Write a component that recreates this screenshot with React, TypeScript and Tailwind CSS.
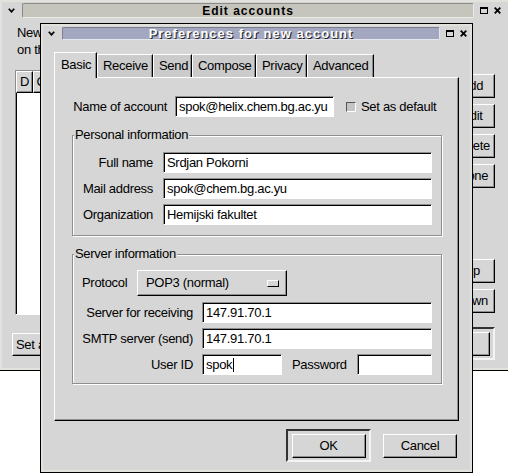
import React from 'react';

const raised =
  'border border-t-white border-l-white border-r-black border-b-black shadow-[inset_-1px_-1px_0_#8e8e8e]';
const sunken =
  'border border-t-[#8e8e8e] border-l-[#8e8e8e] border-r-white border-b-white shadow-[inset_1px_1px_0_#000]';
const etched = 'border border-[#8e8e8e] shadow-[inset_1px_1px_0_#fff,1px_1px_0_#fff]';

function Chevron() {
  return (
    <svg width="7" height="5" viewBox="0 0 7 5">
      <path d="M0.8 0.8 L3.5 3.8 L6.2 0.8" fill="none" stroke="#000" strokeWidth="1.7" />
    </svg>
  );
}

function MaxIcon() {
  return (
    <svg width="8" height="7" viewBox="0 0 8 7">
      <rect x="0.5" y="0.5" width="7" height="6" fill="none" stroke="#000" />
      <rect x="0" y="0" width="8" height="2" fill="#000" />
    </svg>
  );
}

function CloseIcon() {
  return (
    <svg width="7" height="7" viewBox="0 0 7 7">
      <path d="M0.7 0.7 L6.3 6.3 M6.3 0.7 L0.7 6.3" stroke="#000" strokeWidth="1.8" />
    </svg>
  );
}

function Field({ value = '', className = '', cursor = false }: { value?: string; className?: string; cursor?: boolean }) {
  return (
    <div className={`${sunken} flex h-[21px] shrink-0 items-center bg-white pl-[3px] ${className}`}>
      {value}
      {cursor && <span className="ml-px h-[14px] w-px bg-black" />}
    </div>
  );
}

function Tab({ label, width, active = false }: { label: string; width: string; active?: boolean }) {
  return (
    <div
      className={`flex items-center border-t border-l border-r border-t-white border-l-white border-r-black shadow-[inset_-1px_0_0_#8e8e8e] ${width} ${
        active ? 'relative z-10 -mb-px h-[26px] bg-[#d6d6d6] pl-[6px] pb-[2px]' : 'h-[23px] bg-[#cbcbcb] pl-[5px]'
      }`}
    >
      {label}
    </div>
  );
}

function BgButton({ label, className = '' }: { label: string; className?: string }) {
  return <div className={`${raised} flex h-[24px] items-center justify-center ${className}`}>{label}</div>;
}

export default function App() {
  return (
    <div className="relative h-[474px] w-[508px] overflow-hidden bg-white font-['Liberation_Sans',Arial,sans-serif] text-[13px] tracking-[-0.3px] text-black">
      {/* Edit accounts window (mostly covered by the dialog) */}
      <div className="absolute -left-px -top-px h-[372px] w-[512px] border border-black bg-[#d6d6d6] shadow-[inset_0_0_0_2px_#e2e2dc]">
        <div className="flex h-[20px] pt-[3px]">
          <div className="flex w-[22px] justify-center pt-[5px]">
            <Chevron />
          </div>
          <div className="flex h-[15px] w-[452px] items-center justify-center rounded-[2px] border border-t-[#8c8b84] border-l-[#8c8b84] border-r-[#ecece6] border-b-[#ecece6] bg-[#c6c5bd] text-[12px] font-bold leading-none tracking-[1px]">
            Edit accounts
          </div>
          <div className="ml-[6px] flex gap-[6px] pt-[4px]">
            <MaxIcon />
            <CloseIcon />
          </div>
        </div>
        <div className="flex justify-between pl-[12px] pr-[15px]">
          <div className="w-[28px] overflow-hidden">
            <div className="ml-[5px] mt-[4px] whitespace-nowrap leading-[17px]">
              <div>New messages will be checked in this order.</div>
              <div>on the `G' column</div>
            </div>
            <div className={`ml-[3px] mt-[12px] h-[245px] w-[420px] bg-white ${sunken}`}>
              <div className="flex h-[22px]">
                <div className={`${raised} flex w-[17px] items-center justify-center bg-[#d6d6d6]`}>D</div>
                <div className={`${raised} flex w-[17px] items-center justify-center bg-[#d6d6d6]`}>G</div>
                <div className={`${raised} flex flex-1 items-center bg-[#d6d6d6] pl-[4px]`}>Name</div>
              </div>
            </div>
            <div className={`${raised} mt-[18px] flex h-[23px] w-[170px] items-center whitespace-nowrap pl-[3px]`}>
              Set as usually used account
            </div>
          </div>
          <div className="flex w-[90px] flex-col items-end pt-[54px]">
            <div className="flex flex-col gap-[6px]">
              <BgButton label="Add" className="w-[46px]" />
              <BgButton label="Edit" className="w-[46px]" />
              <BgButton label="Delete" className="w-[46px]" />
              <BgButton label="Clone" className="w-[46px]" />
            </div>
            <div className="mt-[71px] flex flex-col gap-[6px]">
              <BgButton label="Up" className="w-[46px]" />
              <BgButton label="Down" className="w-[46px]" />
            </div>
            <div className="mt-[14px] flex h-[33px] w-[90px] items-center justify-center border-2 border-t-[#333] border-l-[#333] border-r-[#f4f4f4] border-b-[#f4f4f4]">
              <BgButton label="Close" className="w-[80px]" />
            </div>
          </div>
        </div>
      </div>

      {/* Preferences dialog */}
      <div className="absolute left-[40px] top-[23px] h-[450px] w-[433px] border border-black bg-[#d6d6d6] shadow-[inset_0_0_0_2px_#e2e2dc]">
        <div className="flex h-[20px] pt-[3px]">
          <div className="flex w-[21px] justify-center pt-[4px]">
            <Chevron />
          </div>
          <div className="flex h-[13px] w-[378px] items-center justify-center rounded-[2px] border border-t-[#7c7e8e] border-l-[#7c7e8e] border-r-[#e6e6ee] border-b-[#e6e6ee] bg-[#a3a7bf] text-[13px] font-bold leading-none tracking-[1px] text-white [text-shadow:1px_1px_0_#222]">
            Preferences for new account
          </div>
          <div className="ml-[6px] flex gap-[6px] pt-[3px]">
            <MaxIcon />
            <CloseIcon />
          </div>
        </div>

        <div className="ml-[13px] mt-[8px] flex items-end">
          <Tab label="Basic" width="w-[43px]" active />
          <Tab label="Receive" width="w-[56px]" />
          <Tab label="Send" width="w-[39px]" />
          <Tab label="Compose" width="w-[64px]" />
          <Tab label="Privacy" width="w-[51px]" />
          <Tab label="Advanced" width="w-[67px]" />
        </div>

        <div className="ml-[13px] h-[344px] w-[405px] border border-t-white border-l-white border-r-black border-b-black shadow-[inset_-1px_-1px_0_#8e8e8e]">
          <div className="mt-[18px] flex h-[21px] items-center">
            <div className="ml-[17px] w-[103px] pr-[8px] text-right">Name of account</div>
            <Field value="spok@helix.chem.bg.ac.yu" className="w-[159px]" />
            <div className="ml-[12px] h-[10px] w-[10px] border border-t-[#555] border-l-[#555] border-r-white border-b-white bg-[#c4c4c4]" />
            <div className="ml-[5px]">Set as default</div>
          </div>

          <fieldset className={`ml-[17px] mt-[11px] w-[370px] pt-[10px] pb-[10px] ${etched}`}>
            <legend className="ml-px bg-[#d6d6d6] px-px leading-[14px]">Personal information</legend>
            <div className="flex flex-col gap-[5px]">
              <div className="flex items-center">
                <div className="w-[90px] pr-[10px] text-right">Full name</div>
                <Field value="Srdjan Pokorni" className="w-[269px]" />
              </div>
              <div className="flex items-center">
                <div className="w-[90px] pr-[10px] text-right">Mail address</div>
                <Field value="spok@chem.bg.ac.yu" className="w-[269px]" />
              </div>
              <div className="flex items-center">
                <div className="w-[90px] pr-[10px] text-right">Organization</div>
                <Field value="Hemijski fakultet" className="w-[269px]" />
              </div>
            </div>
          </fieldset>

          <fieldset className={`ml-[17px] mt-[11px] w-[370px] pt-[9px] pb-[8px] ${etched}`}>
            <legend className="ml-px bg-[#d6d6d6] px-px leading-[14px]">Server information</legend>
            <div className="flex h-[26px] items-center">
              <div className="w-[64px] pl-[9px]">Protocol</div>
              <div className={`${raised} flex h-[26px] w-[150px] items-center justify-between pl-[8px] pr-[7px]`}>
                <span>POP3 (normal)</span>
                <span className="h-[7px] w-[12px] border border-t-white border-l-white border-r-black border-b-black bg-[#d6d6d6]" />
              </div>
            </div>
            <div className="mt-[6px] flex flex-col gap-[5px]">
              <div className="flex items-center">
                <div className="w-[129px] pr-[9px] text-right">Server for receiving</div>
                <Field value="147.91.70.1" className="w-[230px]" />
              </div>
              <div className="flex items-center">
                <div className="w-[129px] pr-[9px] text-right">SMTP server (send)</div>
                <Field value="147.91.70.1" className="w-[230px]" />
              </div>
              <div className="flex w-[359px] items-center">
                <div className="w-[129px] pr-[9px] text-right">User ID</div>
                <Field value="spok" cursor className="w-[80px]" />
                <div className="ml-[10px]">Password</div>
                <Field className="ml-[10px] flex-1" />
              </div>
            </div>
          </fieldset>
        </div>

        <div className="ml-[13px] mt-[8px] flex w-[405px] items-center justify-end gap-[12px] pr-[2px]">
          <div className="flex h-[33px] w-[85px] items-center justify-center border-2 border-t-[#333] border-l-[#333] border-r-[#f4f4f4] border-b-[#f4f4f4]">
            <div className={`${raised} flex h-[24px] w-[74px] items-center justify-center`}>OK</div>
          </div>
          <div className={`${raised} flex h-[24px] w-[74px] items-center justify-center`}>Cancel</div>
        </div>
      </div>
    </div>
  );
}
